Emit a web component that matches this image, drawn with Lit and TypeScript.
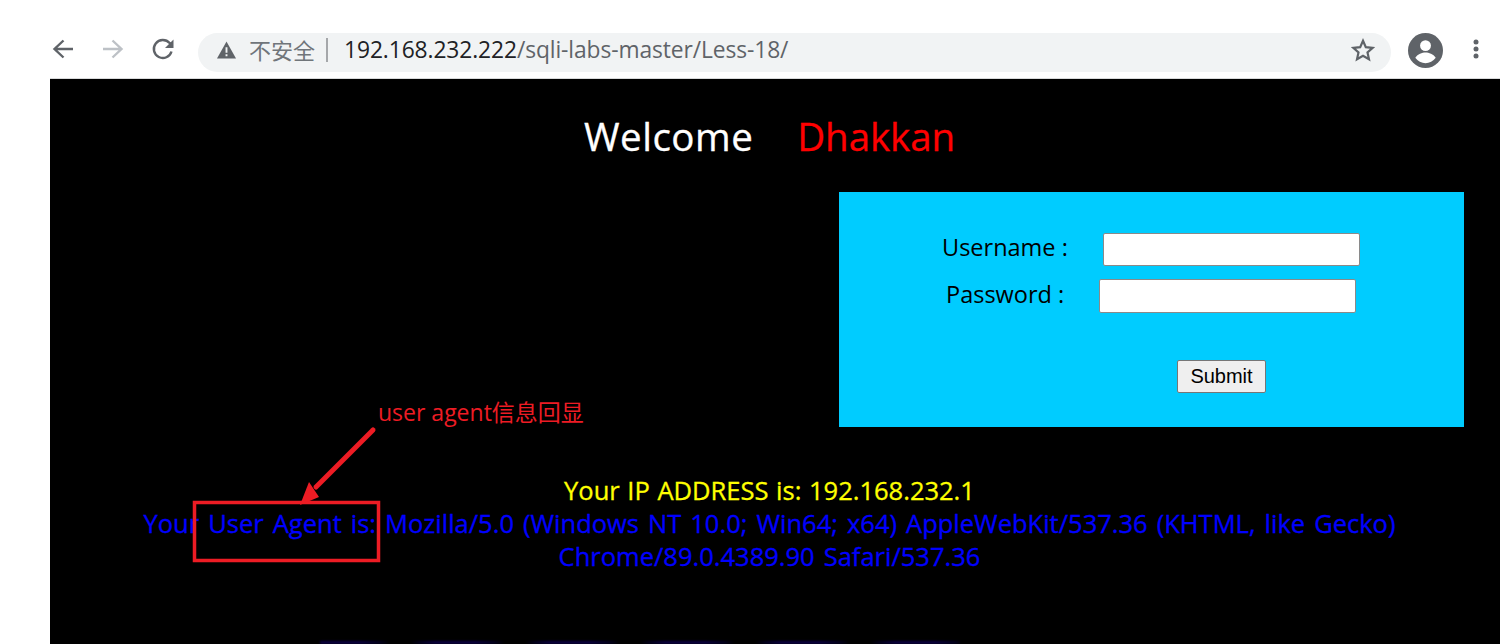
import { LitElement, html, css } from "lit";
import { customElement } from "lit/decorators.js";

@customElement("app-root")
export class AppRoot extends LitElement {
  static styles = css`
    :host { display: block; width: 1500px; height: 644px; overflow: hidden; background: #fff; position: relative;
      font-family: "Open Sans", "Noto Sans", "Noto Sans CJK SC", sans-serif; }
    .toolbar { height: 78px; box-sizing: border-box; padding: 31px 0 0 46px; display: flex; align-items: flex-start; }
    .nav { width: 34px; height: 36px; display: flex; align-items: center; justify-content: center; flex: none; }
    .nav + .nav { margin-left: 16px; }
    .omni { margin: 2px 0 0 18px; width: 1193px; height: 39px; border-radius: 20px; background: #f1f3f4; display: flex; align-items: center;
      padding: 0 16px 5px 19px; box-sizing: border-box; flex: none; }
    .insecure { color: #70757a; font-size: 22px; margin: 0 0 3px 13px; font-family: "Noto Sans CJK SC", sans-serif; white-space: nowrap; line-height: 30px; }
    .sep { width: 2px; height: 24px; background: #a5a7aa; margin: 0 16px 0 11px; }
    .url { font-size: 22.8px; color: #5f6368; white-space: nowrap; letter-spacing: -0.1px; line-height: 30px; }
    .url b { font-weight: 400; color: #202124; }
    .star { margin-left: auto; display: flex; }
    .avatar { margin: 1px 0 0 17px; display: flex; height: 36px; align-items: center; }
    .dots { margin: 0 0 0 30px; height: 36px; display: flex; align-items: center; }
    .page { margin-left: 50px; height: 566px; background: #000; border-top: 1px solid #d9dadb; box-sizing: border-box; padding-right: 11px; display: flex; flex-direction: column; overflow: hidden; position: relative; }
    .welcome { text-align: center; font-size: 38.5px; line-height: 52px; margin-top: 31px; color: #fff; white-space: pre; word-spacing: 1px; -webkit-text-stroke: 0.3px currentColor; }
    .welcome .w { color: #fff; letter-spacing: 0.5px; }
    .welcome .d { color: #ff0000; letter-spacing: -0.1px; }
    .panel { align-self: flex-end; margin: 30px 25px 0 0; width: 625px; height: 235px; background: #00ccff; display: flex; flex-direction: column; box-sizing: border-box; padding-top: 40px; color: #000; }
    .row { display: flex; align-items: center; height: 34px; font-size: 23.5px; }
    .row label { white-space: nowrap; position: relative; top: -2px; }
    .row input { box-sizing: border-box; width: 257px; height: 33px; background: #fff; border: 1px solid #8a8a8a; border-radius: 2px; padding: 0; margin: 0; }
    .user label { margin-left: 103px; margin-right: 35px; }
    .pass { margin-top: 13px; }
    .pass label { margin-left: 107px; margin-right: 35px; }
    .pass input { height: 34px; }
    .submit { margin: 47px 0 0 338px; width: 89px; height: 33px; box-sizing: border-box; background: #efefef; border: 1px solid #767676; border-radius: 2px; padding: 0; color: #000;
      font: 20px "Liberation Sans", Arial, sans-serif; }
    .results { margin-top: 47px; text-align: center; font-size: 25.5px; line-height: 33px; white-space: nowrap; -webkit-text-stroke: 0.3px currentColor; }
    .ip { color: #ffff00; word-spacing: 1px; }
    .ua { color: #0000ff; word-spacing: 2.4px; }
    .note { position: absolute; left: 378px; top: 398px; color: #ed1c24; font-size: 23px; line-height: 28px; white-space: nowrap; font-family: "Open Sans", "Noto Sans CJK SC", sans-serif; }
    .mark { position: absolute; left: 0; top: 0; pointer-events: none; }
    .glow { position: absolute; left: 270px; bottom: 0; width: 640px; height: 3px;
      background: repeating-linear-gradient(90deg, #14007a 0 40px, #06003a 60px, #000 70px, #000 90px, #06003a 100px, #14007a 115px); filter: blur(1px); opacity: .55; }
  `;

  render() {
    return html`
      <div class="toolbar">
        <div class="nav">
          <svg width="24" height="24" viewBox="0 0 24 24"><path d="M22 12H5M12.5 3.5 3.5 12l9 8.5" fill="none" stroke="#5f6368" stroke-width="2.4"/></svg>
        </div>
        <div class="nav">
          <svg width="24" height="24" viewBox="0 0 24 24"><path d="M2 12h17M11.500 3.500l9 8.500-9 8.500" fill="none" stroke="#bdc1c6" stroke-width="2.4"/></svg>
        </div>
        <div class="nav">
          <svg width="24" height="24" viewBox="0 0 24 24"><path d="M20.500 14.500A9 9 0 1 1 18.600 6L21 8.200" fill="none" stroke="#5f6368" stroke-width="2.4"/><path d="M22.500 2.500v8.500H14z" fill="#5f6368"/></svg>
        </div>
        <div class="omni">
          <svg width="19" height="18" viewBox="0 0 20 18"><path d="M10 0 20 18H0z" fill="#5f6368"/><path d="M9 6h2v6H9zM9 13.500h2v2H9z" fill="#f1f3f4"/></svg>
          <span class="insecure">不安全</span>
          <span class="sep"></span>
          <span class="url"><b>192.168.232.222</b>/sqli-labs-master/Less-18/</span>
          <span class="star">
            <svg width="24" height="24" viewBox="0 0 24 24"><path d="m12 2.800 2.800 6.300 6.900.7-5.200 4.600 1.500 6.800-6-3.500-6 3.500 1.500-6.800-5.200-4.600 6.900-.7z" fill="none" stroke="#5f6368" stroke-width="2.2" stroke-linejoin="miter"/></svg>
          </span>
        </div>
        <div class="avatar">
          <svg width="35" height="35" viewBox="0 0 36 36"><circle cx="18" cy="18" r="18" fill="#5f6368"/><circle cx="18" cy="13" r="5.600" fill="#fff"/><path d="M7.500 25.500c2.500-4 7-5.500 10.500-5.500s8 1.500 10.500 5.500c-2.500 3.500-6.500 5.500-10.500 5.500s-8-2-10.500-5.500z" fill="#fff"/></svg>
        </div>
        <div class="dots">
          <svg width="6" height="24" viewBox="0 0 6 24"><circle cx="3" cy="5" r="2.500" fill="#5f6368"/><circle cx="3" cy="12" r="2.500" fill="#5f6368"/><circle cx="3" cy="19" r="2.500" fill="#5f6368"/></svg>
        </div>
      </div>
      <div class="page">
        <div class="welcome"><span class="w">Welcome</span>    <span class="d">Dhakkan</span></div>
        <div class="panel">
          <div class="row user"><label>Username :</label><input type="text" /></div>
          <div class="row pass"><label>Password :</label><input type="password" /></div>
          <button class="submit">Submit</button>
        </div>
        <div class="results">
          <div class="ip">Your IP ADDRESS is: 192.168.232.1</div>
          <div class="ua">Your User Agent is: Mozilla/5.0 (Windows NT 10.0; Win64; x64) AppleWebKit/537.36 (KHTML, like Gecko)<br />Chrome/89.0.4389.90 Safari/537.36</div>
        </div>
        <div class="glow"></div>
      </div>
      <div class="note">user agent信息回显</div>
      <svg class="mark" width="1500" height="644" viewBox="0 0 1500 644">
        <rect x="194.500" y="502.500" width="184" height="58" fill="none" stroke="#ed1c24" stroke-width="3.500"/>
        <path d="M373 430 L316 487" stroke="#ed1c24" stroke-width="5" stroke-linecap="round" fill="none"/>
        <path d="M300 505 L309 482 L319 497 Z" fill="#ed1c24"/>
      </svg>
    `;
  }
}
